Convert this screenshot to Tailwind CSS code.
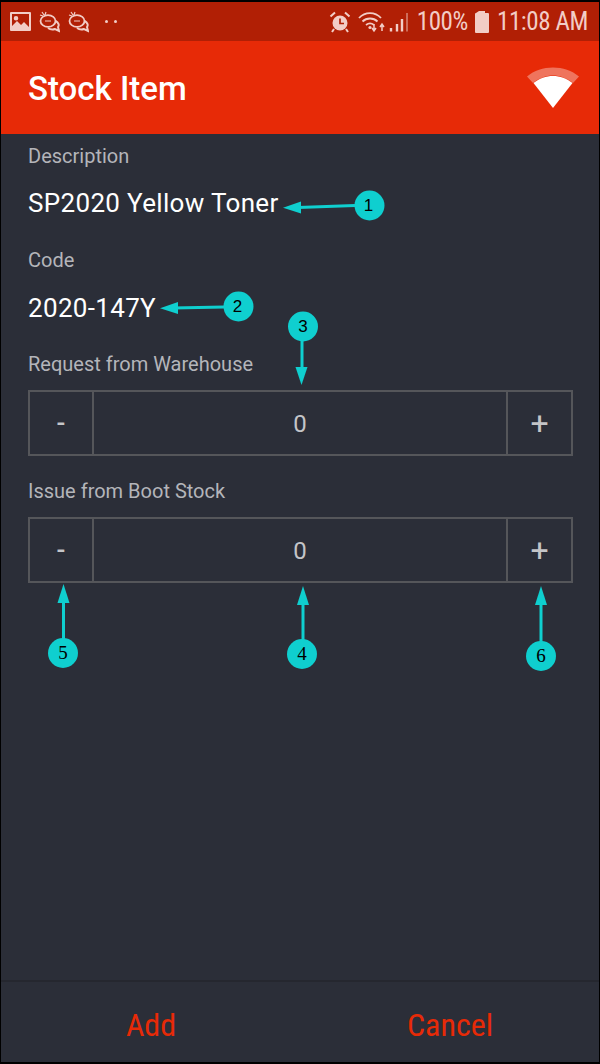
<!DOCTYPE html>
<html lang="en">
<head>
    <meta charset="UTF-8">
    <meta name="viewport" content="width=device-width, initial-scale=1.0">
    <title>Stock Item</title>
    <script src="https://cdn.jsdelivr.net/npm/@tailwindcss/browser@4"></script>
</head>

<body class="bg-black font-['Roboto',sans-serif]">
    <div class="relative w-[600px] h-[1064px] overflow-hidden bg-black pt-[2px] pb-[2px] pl-[1px] pr-[1px] flex flex-col">
        <!-- Status bar -->
        <div class="h-[39px] shrink-0 bg-[#b11f05] flex items-center justify-between pl-[9px] pr-[11px] text-[#f2cdc6]">
            <div class="flex items-center gap-[8px]">
                <svg width="21" height="19" viewBox="0 0 21 19" class="block">
                    <path fill="#f2cdc6" fill-rule="evenodd" d="M1 0h19a1 1 0 0 1 1 1v17a1 1 0 0 1-1 1H1a1 1 0 0 1-1-1V1a1 1 0 0 1 1-1zM2 2v12l5-5 4 4 3-3 5 5V2zM6 4a2.3 2.3 0 1 1 0 4.6A2.3 2.3 0 0 1 6 4z"/>
                </svg>
                <svg width="21" height="22" viewBox="0 0 21 22" class="block" fill="none" stroke="#f2cdc6">
                    <ellipse cx="9" cy="10" rx="7.5" ry="5.8" stroke-width="1.8"/>
                    <path d="M6 10h6" stroke-width="1"/>
                    <path d="M3 1l2 3M1 4l3 1M7 1L6 4" stroke-width="1.2"/>
                    <path d="M16.5 10c3 1.500 4 4 2.500 6l1 4-4-2c-2.500 1-5 .5-7-1" stroke-width="2"/>
                </svg>
                <svg width="21" height="22" viewBox="0 0 21 22" class="block" fill="none" stroke="#f2cdc6">
                    <ellipse cx="9" cy="10" rx="7.5" ry="5.8" stroke-width="1.8"/>
                    <path d="M6 10h6" stroke-width="1"/>
                    <path d="M3 1l2 3M1 4l3 1M7 1L6 4" stroke-width="1.2"/>
                    <path d="M16.5 10c3 1.500 4 4 2.500 6l1 4-4-2c-2.500 1-5 .5-7-1" stroke-width="2"/>
                </svg>
                <div class="flex gap-[6px] ml-[8px]">
                    <span class="w-[3px] h-[3px] rounded-full bg-[#f2cdc6]"></span>
                    <span class="w-[3px] h-[3px] rounded-full bg-[#f2cdc6]"></span>
                </div>
            </div>
            <div class="flex items-center">
                <svg width="22" height="22" viewBox="0 0 22 22" class="block" fill="none" stroke="#f2cdc6">
                    <circle cx="11" cy="12" r="7.500" fill="#f2cdc6" stroke="none"/>
                    <path d="M11 7.500v5h4" stroke="#b11f05" stroke-width="1.700"/>
                    <path d="M1.500 5.500L6 1.500M20.500 5.500L16 1.500M5 18l-2 3M17 18l2 3" stroke-width="2"/>
                </svg>
                <svg width="50" height="22" viewBox="0 0 50 22" class="block ml-[7px]" fill="none" stroke="#f2cdc6">
                    <path d="M1 7c6-6.500 16-6.500 22 0M4.500 10.500c4-4 11-4 15 0M8 14c2.500-2 5.500-2 8 0" stroke-width="1.800"/>
                    <circle cx="12" cy="16.500" r="1.600" fill="#f2cdc6" stroke="none"/>
                    <path d="M16 13v6M14 17l2 3 2-3M24 20v-6M22 16l2-3 2 3" stroke-width="1.500"/>
                    <path d="M33 20.500v-3.500M39 20.500v-7.500M44 20.500v-12.500" stroke-width="2.400"/>
                    <path d="M49 20.500V2" stroke-width="2" stroke-opacity="0.45"/>
                </svg>
                <span class="ml-[9px] text-[25px] leading-none tracking-[-0.4px] font-['Roboto_Condensed','Roboto',sans-serif]">100%</span>
                <svg width="14" height="22" viewBox="0 0 14 22" class="block ml-[7px]">
                    <path fill="#f2cdc6" d="M4 0h6v2h3a1 1 0 0 1 1 1v18a1 1 0 0 1-1 1H1a1 1 0 0 1-1-1V3a1 1 0 0 1 1-1z"/>
                </svg>
                <span class="ml-[8px] text-[25px] leading-none tracking-[-0.4px] whitespace-nowrap font-['Roboto_Condensed','Roboto',sans-serif]">11:08 AM</span>
            </div>
        </div>

        <!-- Toolbar -->
        <div class="h-[93px] shrink-0 bg-[#e72a07] flex items-center justify-between pl-[27px] pr-[20px]">
            <h1 class="text-[33px] leading-none font-medium text-white pt-[1px]">Stock Item</h1>
            <svg width="52" height="42" viewBox="0 0 52 42" class="block">
                <path fill="#fff" fill-opacity="0.35" d="M0 9.500C14-2.500 38-2.500 52 9.500L46 16C34 6 18 6 6 16z"/>
                <path fill="#fff" d="M6.500 16C18 6.500 34 6.500 45.500 16L26 41z"/>
            </svg>
        </div>

        <!-- Content -->
        <div class="flex-1 bg-[#2b2e38] pl-[27px] pr-[26px] flex flex-col">
            <p class="mt-[10px] text-[20px] leading-[24px] text-[#b4b5ba]">Description</p>
            <p class="mt-[18px] text-[26px] leading-[34px] tracking-[0.33px] text-white">SP2020 Yellow Toner</p>
            <p class="mt-[28px] text-[20px] leading-[24px] text-[#b4b5ba]">Code</p>
            <p class="mt-[19px] text-[26px] leading-[34px] tracking-[0.33px] text-white">2020-147Y</p>
            <p class="mt-[27px] text-[20px] leading-[24px] text-[#b4b5ba]">Request from Warehouse</p>
            <div class="mt-[14px] h-[66px] border-2 border-[#55565a] flex items-center text-[#c4c5c8]">
                <div class="w-[64px] h-full border-r-2 border-[#55565a] flex items-center justify-center text-[26px] font-medium">-</div>
                <div class="flex-1 text-center text-[24px] pt-[2px]">0</div>
                <div class="w-[65px] h-full border-l-2 border-[#55565a] flex items-center justify-center text-[32px]">+</div>
            </div>
            <p class="mt-[23px] text-[20px] leading-[24px] text-[#b4b5ba]">Issue from Boot Stock</p>
            <div class="mt-[14px] h-[66px] border-2 border-[#55565a] flex items-center text-[#c4c5c8]">
                <div class="w-[64px] h-full border-r-2 border-[#55565a] flex items-center justify-center text-[26px] font-medium">-</div>
                <div class="flex-1 text-center text-[24px] pt-[2px]">0</div>
                <div class="w-[65px] h-full border-l-2 border-[#55565a] flex items-center justify-center text-[32px]">+</div>
            </div>
        </div>

        <!-- Footer buttons -->
        <div class="h-[82px] shrink-0 bg-[#2b2e38] border-t-2 border-[#25272f] pt-[6px] flex items-center text-[32px] text-[#e72a07] font-['Roboto_Condensed','Roboto',sans-serif]">
            <button class="w-[300px] text-center">Add</button>
            <button class="flex-1 text-center">Cancel</button>
        </div>

        <!-- Callouts drawn over the screenshot -->
        <svg width="600" height="1064" viewBox="0 0 600 1064" class="absolute inset-0 pointer-events-none" stroke="#0fcfcf" fill="#0fcfcf">
            <path d="M355 205.500L298 207.500" stroke-width="3"/>
            <path d="M283 207.800L301 201.500V213.500z" stroke="none"/>
            <path d="M224 307L173 308" stroke-width="3"/>
            <path d="M160 308.200L178 302V314z" stroke="none"/>
            <path d="M302 341L302 370" stroke-width="3"/>
            <path d="M301.500 385L295.500 367H307.500z" stroke="none"/>
            <path d="M303 640V600" stroke-width="3"/>
            <path d="M303 586L297 605H309z" stroke="none"/>
            <path d="M63.500 639V600" stroke-width="3"/>
            <path d="M63.500 584L57.500 603H69.500z" stroke="none"/>
            <path d="M541 642V600" stroke-width="3"/>
            <path d="M541 586L535 605H547z" stroke="none"/>
            <g stroke="none">
                <circle cx="369.500" cy="205.500" r="15"/>
                <circle cx="238.500" cy="306.500" r="15"/>
                <circle cx="303" cy="326.500" r="15"/>
                <circle cx="302" cy="654" r="15"/>
                <circle cx="63" cy="653" r="15"/>
                <circle cx="541" cy="656" r="15"/>
            </g>
            <g stroke="none" fill="#000" text-anchor="middle" font-size="17">
                <text x="368.500" y="211" font-family="Liberation Sans, sans-serif">1</text>
                <text x="237.500" y="312" font-family="Liberation Sans, sans-serif">2</text>
                <text x="303" y="332" font-family="Liberation Sans, sans-serif">3</text>
                <text x="302" y="660" font-family="Liberation Serif, serif" font-size="19">4</text>
                <text x="63" y="659" font-family="Liberation Serif, serif" font-size="19">5</text>
                <text x="541" y="662" font-family="Liberation Serif, serif" font-size="19">6</text>
            </g>
        </svg>
    </div>
</body>
</html>
